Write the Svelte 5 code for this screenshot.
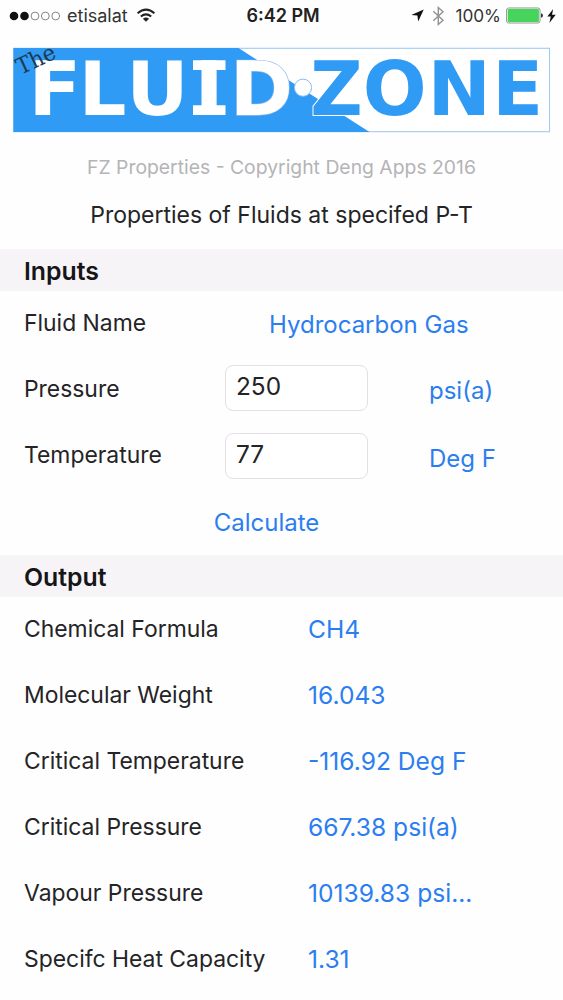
<script>
  // Glyph boxes in font units, then the left and right edge of each letter in the banner.
  const unit = 75.5 / 2048;
  const place = ([char, boxLeft, boxRight, left, right]) => {
    const scale = (right - left) / ((boxRight - boxLeft) * unit);
    return { char, scale, x: left - boxLeft * unit * scale };
  };
  const fluid = [
    ['F', 188, 1237, 35.5, 75],
    ['L', 188, 1270, 85.5, 125],
    ['U', 178, 1485, 133, 182],
    ['I', 188, 573, 201.5, 216.5],
    ['D', 188, 1593, 237, 289]
  ].map(place);
  const zone = [
    ['Z', 92, 1393, 313.5, 359.5],
    ['O', 102, 1640, 366.5, 423],
    ['N', 188, 1526, 434.5, 484],
    ['E', 188, 1274, 499, 538.5]
  ].map(place);

  let pressure = $state('250');
  let temperature = $state('77');

  const outputs = [
    ['Chemical Formula', 'CH4'],
    ['Molecular Weight', '16.043'],
    ['Critical Temperature', '-116.92 Deg F'],
    ['Critical Pressure', '667.38 psi(a)'],
    ['Vapour Pressure', '10139.83 psi...'],
    ['Specifc Heat Capacity', '1.31']
  ];
</script>

<div class="screen">
  <header class="status">
    <div class="side">
      <svg width="52" height="10" viewBox="0 0 52 10">
        <circle cx="5" cy="5" r="4.3" fill="#111" />
        <circle cx="15.5" cy="5" r="4.3" fill="#111" />
        <circle cx="26" cy="5" r="3.9" class="hollow" />
        <circle cx="36.3" cy="5" r="3.9" class="hollow" />
        <circle cx="46.7" cy="5" r="3.9" class="hollow" />
      </svg>
      <span class="carrier">etisalat</span>
      <svg class="wifi" width="20" height="15" viewBox="0 0 20 15">
        <g fill="none" stroke="#222" stroke-width="2">
          <path d="M1.6 5.2 Q10 -2 18.4 5.2" />
          <path d="M4.8 8.6 Q10 4.2 15.2 8.6" />
        </g>
        <path d="M10 13.8 L6.9 10.7 Q10 8.4 13.1 10.7 Z" fill="#222" />
      </svg>
    </div>
    <span class="time">6:42 PM</span>
    <div class="side end">
      <svg width="13" height="13" viewBox="0 0 13 13"><path d="M12.7 0.4 L7.2 12.6 L6.4 6.6 L0.3 5.9 Z" fill="#111" /></svg>
      <svg class="bt" width="13" height="20" viewBox="0 0 13 20"><path d="M1.3 5.2 L11 14.3 L6.3 18.5 V1.5 L11 5.7 L1.3 14.8" fill="none" stroke="#929292" stroke-width="1.4" /></svg>
      <span class="percent">100%</span>
      <svg class="battery" width="38" height="17" viewBox="0 0 38 17">
        <rect x="0.6" y="1" width="33.4" height="15" rx="2" fill="#fff" stroke="#8d978d" stroke-width="1" />
        <rect x="1.7" y="2.1" width="31.2" height="12.8" rx="1" fill="#46d45c" />
        <path d="M35 6.2 Q37 6.4 37 8.5 Q37 10.6 35 10.8 Z" fill="#333" />
      </svg>
      <svg width="9" height="14" viewBox="0 0 9 14"><path d="M6.2 0 L0.3 7.6 H3.8 L2.4 14 L8.7 5.8 H5 Z" fill="#111" /></svg>
    </div>
  </header>

  <svg class="banner" width="563" height="102" viewBox="0 38 563 102">
    <rect x="13.5" y="48.3" width="536" height="83.4" fill="#fff" stroke="#9fcaf2" stroke-width="1.1" />
    <path d="M13.5 48 H238.5 L369.5 132 H13.5 Z" fill="#2f9bf4" />
    <g class="letters fluid">
      {#each fluid as g}
        <text class:edged={g.char === 'D'} transform="translate({g.x} 115) scale({g.scale} 1)">{g.char}</text>
      {/each}
      <path d="M193 60.3 H225.5 V70 H193 Z M193 105.3 H225.5 V115 H193 Z" />
    </g>
    <circle cx="303" cy="87.7" r="8.6" fill="#fff" stroke="#8abcf0" stroke-width="1" />
    <g class="letters zone">
      {#each zone as g}
        <text transform="translate({g.x} 115) scale({g.scale} 1)">{g.char}</text>
      {/each}
    </g>
    <text class="the" transform="translate(20.5 75) rotate(-25)" textLength="41" lengthAdjust="spacingAndGlyphs">The</text>
  </svg>

  <p class="copyright">FZ Properties - Copyright Deng Apps 2016</p>
  <h1>Properties of Fluids at specifed P-T</h1>

  <h2>Inputs</h2>
  <div class="inputs">
    <div class="row"><span class="label">Fluid Name</span><span class="link name">Hydrocarbon Gas</span></div>
    <div class="row">
      <label class="label" for="p">Pressure</label>
      <input id="p" bind:value={pressure} />
      <span class="link unit">psi(a)</span>
    </div>
    <div class="row">
      <label class="label" for="t">Temperature</label>
      <input id="t" class="lower" bind:value={temperature} />
      <span class="link unit deg">Deg F</span>
    </div>
    <button class="link">Calculate</button>
  </div>

  <h2>Output</h2>
  {#each outputs as [label, value]}
    <div class="row out"><span class="label">{label}</span><span class="link">{value}</span></div>
  {/each}
</div>

<style>
  :global(body) { margin: 0; background: #fefefe; }
  .screen { width: 563px; height: 1000px; overflow: hidden; background: #fefefe; color: #242426; font-family: Inter, "Liberation Sans", sans-serif; }
  .screen :global(svg) { display: block; flex: none; }
  .status { display: grid; grid-template-columns: 1fr auto 1fr; align-items: center; height: 31px; margin-bottom: 7px; padding: 0 7px 0 9px; font-size: 18px; line-height: 31px; }
  .side { display: flex; align-items: center; }
  .end { justify-content: flex-end; }
  .hollow { fill: #fff; stroke: #777; stroke-width: 0.9; }
  .carrier { margin-left: 6px; color: #333; }
  .wifi { margin-left: 8px; }
  .time { padding-left: 1px; font-weight: 600; color: #222; }
  .bt { margin-left: 8px; }
  .percent { margin-left: 10px; font-size: 17.2px; color: #333; }
  .battery { margin: 0 3px 0 5px; }
  .letters { font: bold 75.5px "DejaVu Sans", sans-serif; }
  .fluid { fill: #fff; }
  .edged { stroke: #8fbdf2; stroke-width: 1.4; paint-order: stroke; }
  .zone { fill: #2f9bf4; stroke: #fff; stroke-width: 2; paint-order: stroke; }
  .the { font: 22.5px "DejaVu Serif", serif; fill: #1d3a52; }
  p, h1, h2 { margin: 0; font-weight: 400; }
  .copyright { height: 54px; line-height: 54px; text-align: center; font-size: 19.35px; color: #b4b4b6; }
  h1 { height: 55px; line-height: 42px; text-align: center; font-size: 23px; }
  h2 { box-sizing: border-box; height: 42px; padding-left: 24px; line-height: 44px; font-size: 24.8px; font-weight: 600; background: #f6f4f7; color: #161617; }
  .row { display: flex; align-items: center; box-sizing: border-box; height: 66px; padding: 0 0 2px 24px; }
  .inputs { height: 264px; }
  .label { width: 201px; flex: none; font-size: 22.9px; padding-bottom: 1px; }
  .link { font-size: 24px; color: #2c7ef0; }
  .name { margin-left: 44px; padding-top: 2px; }
  input { box-sizing: border-box; width: 143px; height: 46px; margin: -2px 61px 0 0; padding: 0 10px 4px; border: 1.5px solid #e3dfe5; border-radius: 8px; background: #fff; font: 24.4px Inter, sans-serif; color: #242426; outline: none; }
  .lower { margin-top: 2px; }
  .unit { padding-top: 2px; }
  .deg { padding-top: 6px; }
  button { display: block; width: 533px; height: 66px; padding: 0; border: 0; background: none; font-family: inherit; }
  .out .label { width: 284px; }
  .out .link { font-size: 24.6px; }
</style>
